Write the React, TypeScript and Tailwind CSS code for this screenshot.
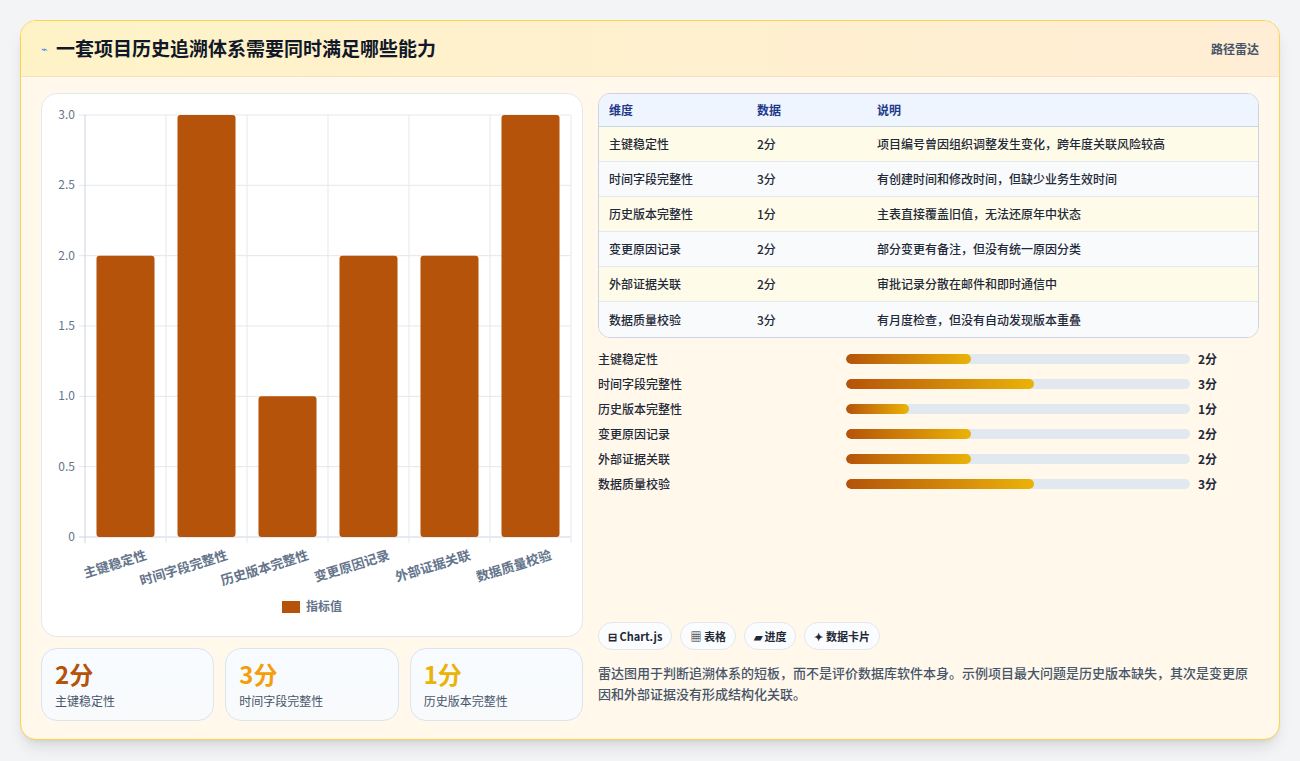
import React from "react";

const rows = [
  { k: "主键稳定性", v: 2, d: "项目编号曾因组织调整发生变化，跨年度关联风险较高" },
  { k: "时间字段完整性", v: 3, d: "有创建时间和修改时间，但缺少业务生效时间" },
  { k: "历史版本完整性", v: 1, d: "主表直接覆盖旧值，无法还原年中状态" },
  { k: "变更原因记录", v: 2, d: "部分变更有备注，但没有统一原因分类" },
  { k: "外部证据关联", v: 2, d: "审批记录分散在邮件和即时通信中" },
  { k: "数据质量校验", v: 3, d: "有月度检查，但没有自动发现版本重叠" },
];

const font = { fontFamily: '"Noto Sans CJK SC", "Liberation Sans", sans-serif' };

function Chart() {
  const ox = 41, oy = 94;
  const left = 84 - ox, right = 570 - ox, top = 115 - oy, bottom = 537 - oy;
  const unit = (bottom - top) / 3;
  const cw = (right - left) / 6;
  return (
    <svg width="540" height="541" viewBox="0 0 540 541">
      {[0, 0.5, 1, 1.5, 2, 2.5, 3].map((t) => {
        const y = bottom - t * unit;
        return (
          <g key={t}>
            <line x1={left - 6} x2={right} y1={y} y2={y} stroke={t === 0 ? "#cbd5e1" : "#e5e7eb"} />
            <text x={left - 10} y={y + 4} textAnchor="end" fontSize="12" fill="#64748b" style={font}>
              {t === 0 ? "0" : t.toFixed(1)}
            </text>
          </g>
        );
      })}
      {[0, 1, 2, 3, 4, 5, 6].map((i) => (
        <line key={i} x1={left + i * cw} x2={left + i * cw} y1={top} y2={bottom + 6} stroke={i === 0 ? "#cbd5e1" : "#e5e7eb"} />
      ))}
      {rows.map((r, i) => {
        const cx = left + cw * i + cw / 2;
        const h = r.v * unit;
        return (
          <g key={r.k}>
            <rect x={cx - 29} y={bottom - h} width={58} height={h} rx={3} fill="#b45309" />
            <text
              x={cx + 22}
              y={bottom + 22}
              textAnchor="end"
              fontSize="13"
              fontWeight="700"
              fill="#64748b"
              style={font}
              transform={`rotate(-17 ${cx + 22} ${bottom + 22})`}
            >
              {r.k}
            </text>
          </g>
        );
      })}
      <rect x={240} y={507} width={18} height={12} fill="#b45309" />
      <text x={264} y={517} fontSize="12" fontWeight="700" fill="#64748b" style={font}>指标值</text>
    </svg>
  );
}

export default function App() {
  const colors = ["text-[#b45309]", "text-[#f59e0b]", "text-[#eab308]"];
  return (
    <div className="w-[1300px] h-[761px] bg-[#f3f4f6] pt-5 px-5" style={font}>
      <div className="w-[1260px] h-[720px] rounded-2xl border border-[#fcd34d] bg-[#fff8eb] overflow-hidden shadow-lg flex flex-col">
        <div className="h-[56px] shrink-0 flex items-center justify-between px-5 bg-gradient-to-r from-[#fef3c7] to-[#ffedd5] border-b border-[#f3e3c0]">
          <div className="flex items-center gap-2">
            <span className="text-[11px] text-[#3b82f6]">⌁</span>
            <span className="text-[19px] font-bold text-[#111827]">一套项目历史追溯体系需要同时满足哪些能力</span>
          </div>
          <span className="text-[12px] font-bold text-[#475569]">路径雷达</span>
        </div>
        <div className="flex gap-[15px] px-5 pt-4">
          <div className="w-[542px] flex flex-col gap-[11px]">
            <div className="h-[544px] bg-white rounded-2xl border border-[#e2e8f0] overflow-hidden">
              <Chart />
            </div>
            <div className="grid grid-cols-3 gap-[11px]">
              {rows.slice(0, 3).map((r, i) => (
                <div key={r.k} className="h-[73px] rounded-2xl border border-[#dbe5f0] bg-gradient-to-b from-[#f8fbff] to-[#f8fafc] px-[13px] pt-[10px]">
                  <div className={`text-[24px] leading-[30px] font-bold ${colors[i]}`}>{r.v}分</div>
                  <div className="text-[12px] text-[#475569] mt-[3px]">{r.k}</div>
                </div>
              ))}
            </div>
          </div>
          <div className="w-[663px] flex flex-col">
            <div className="rounded-xl border border-[#cbd5e1] overflow-hidden text-[12px] font-medium text-[#1f2937]">
              <div className="h-[33px] flex items-center bg-[#eef5fe] text-[#1e3a8a] font-bold border-b border-[#cbd5e1]">
                <div className="w-[158px] pl-[10px]">维度</div>
                <div className="w-[120px]">数据</div>
                <div>说明</div>
              </div>
              {rows.map((r, i) => (
                <div key={r.k} className={`h-[35px] flex items-center ${i % 2 === 0 ? "bg-[#fefbe8]" : "bg-[#f8fafc]"} ${i < 5 ? "border-b border-[#e2e8f0]" : ""}`}>
                  <div className="w-[158px] pl-[10px]">{r.k}</div>
                  <div className="w-[120px]">{r.v}分</div>
                  <div>{r.d}</div>
                </div>
              ))}
            </div>
            <div className="mt-[8px] flex flex-col">
              {rows.map((r) => (
                <div key={r.k} className="h-[25px] flex items-center text-[12px] text-[#1f2937] font-medium">
                  <div className="w-[248px]">{r.k}</div>
                  <div className="w-[344px] h-[10px] rounded-full bg-[#e2e8f0] overflow-hidden">
                    <div className="h-full rounded-full bg-gradient-to-r from-[#b45309] to-[#eab308]" style={{ width: `${(r.v / 5.5) * 100}%` }} />
                  </div>
                  <div className="ml-2 font-bold">{r.v}分</div>
                </div>
              ))}
            </div>
            <div className="mt-auto flex gap-2 text-[11px] font-bold text-[#1f2937]">
              {["⊟ Chart.js", "▦ 表格", "▰ 进度", "✦ 数据卡片"].map((c) => (
                <span key={c} className="h-[28px] px-[9px] flex items-center rounded-full border border-[#e2e8f0] bg-[#fbfcfd]">{c}</span>
              ))}
            </div>
            <p className="mt-[12px] mb-[17px] text-[13px] leading-[21px] font-medium text-[#475569]">
              雷达图用于判断追溯体系的短板，而不是评价数据库软件本身。示例项目最大问题是历史版本缺失，其次是变更原因和外部证据没有形成结构化关联。
            </p>
          </div>
        </div>
      </div>
    </div>
  );
}
